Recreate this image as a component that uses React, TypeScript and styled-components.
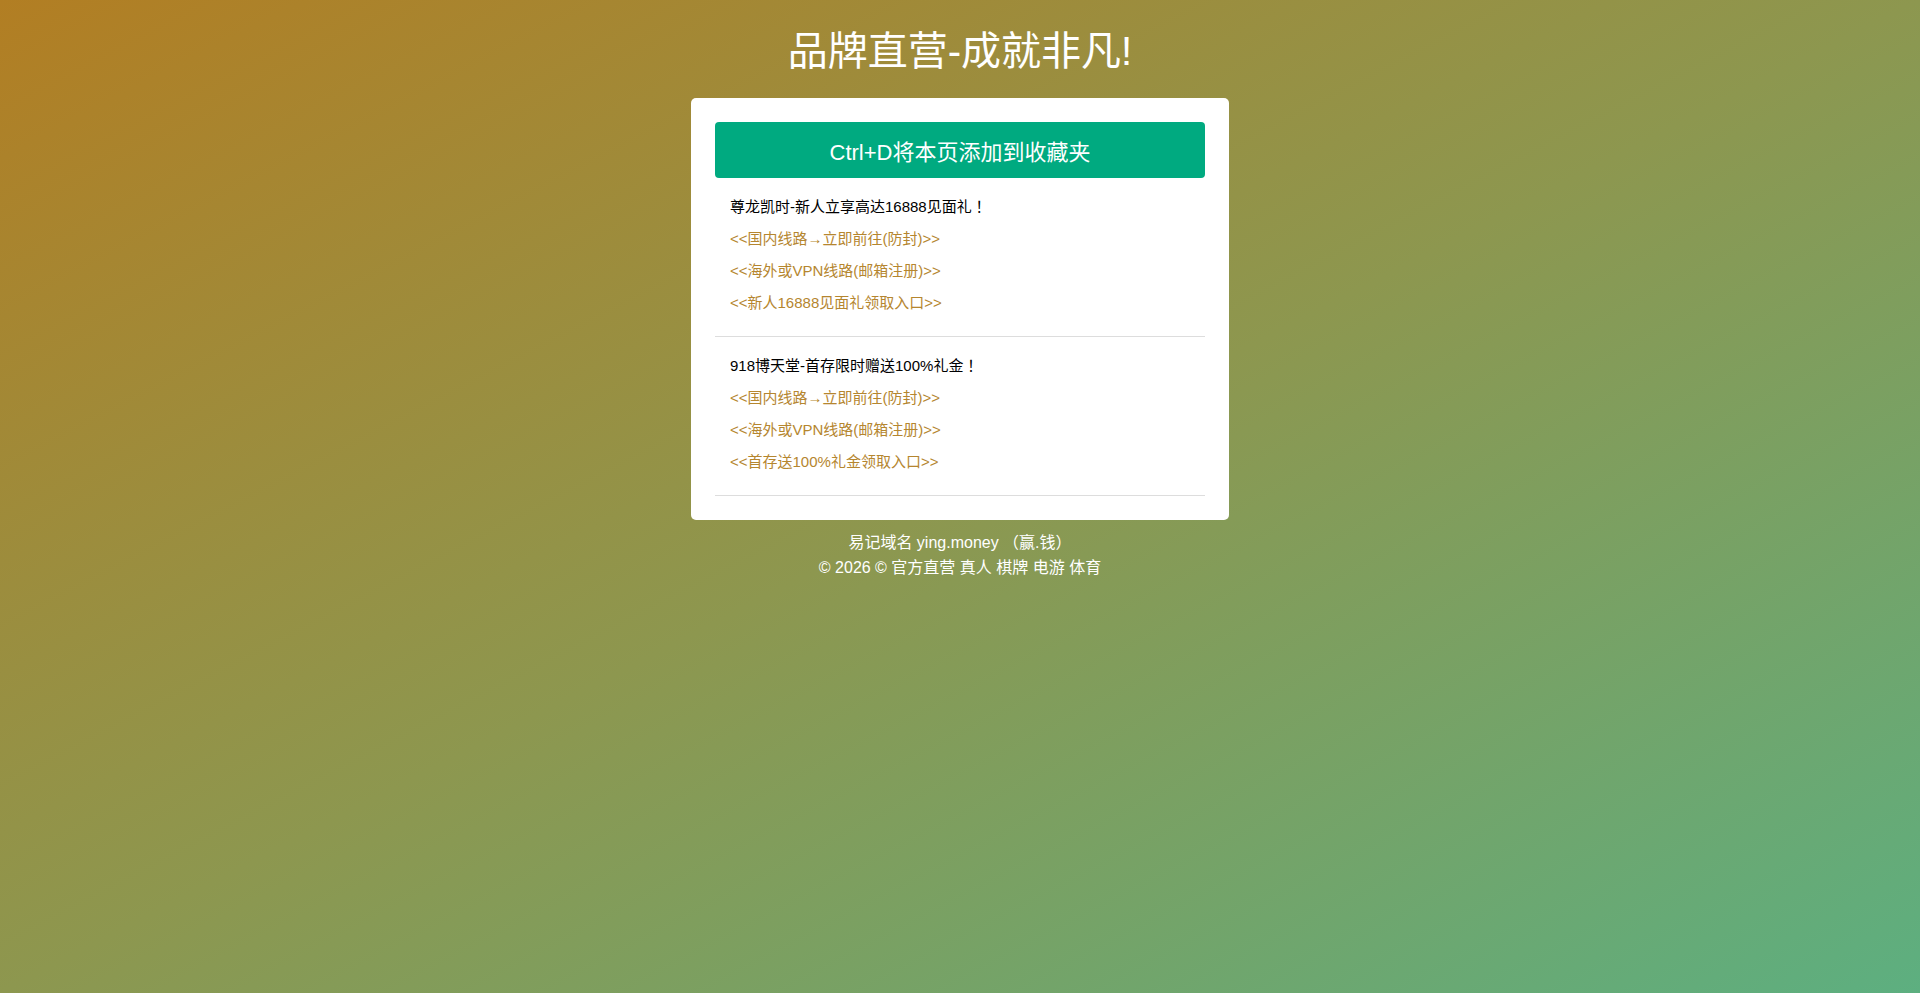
import React from 'react';
import styled, { createGlobalStyle } from 'styled-components';

const GlobalStyle = createGlobalStyle`
  html, body {
    margin: 0;
    padding: 0;
    min-height: 100%;
  }
  body {
    font-family: "Liberation Sans", Arial, "Noto Sans CJK SC", sans-serif;
    background: linear-gradient(to bottom right, #b27e23 0%, #8d974f 50%, #5daf80 100%);
    background-attachment: fixed;
    min-height: 993px;
  }
`;

const Page = styled.div`
  display: flex;
  flex-direction: column;
  align-items: center;
  padding-top: 27px;
  min-height: 993px;
  box-sizing: border-box;
`;

const Title = styled.h1`
  margin: 0 0 23px;
  font-size: 40px;
  line-height: 48px;
  font-weight: 400;
  color: #fff;
  text-align: center;
`;

const Card = styled.div`
  width: 538px;
  box-sizing: border-box;
  background: #fff;
  border-radius: 5px;
  padding: 24px;
`;

const FavButton = styled.div`
  height: 56px;
  display: flex;
  align-items: center;
  justify-content: center;
  background: #00aa80;
  border-radius: 4px;
  color: #fff;
  font-size: 22px;
`;

const Block = styled.ul`
  list-style: none;
  margin: 0;
  padding: 13px 15px 17px;
  border-bottom: 1px solid #dddddd;
`;

const Line = styled.li<{ $link?: boolean }>`
  font-size: 15px;
  line-height: 32px;
  color: ${({ $link }) => ($link ? '#b5862f' : '#000')};
  cursor: ${({ $link }) => ($link ? 'pointer' : 'default')};
`;

// full-width mark with the glyph centred in its em box
const Bang = styled.span`
  font-family: "Noto Sans CJK TC", "Noto Sans CJK SC", sans-serif;
  line-height: 0;
`;

const Footer = styled.div`
  margin-top: 11px;
  color: #fff;
  font-size: 16px;
  line-height: 24.5px;
  text-align: center;
`;

const sites = [
  {
    name: '尊龙凯时-新人立享高达16888见面礼',
    links: ['<<国内线路→立即前往(防封)>>', '<<海外或VPN线路(邮箱注册)>>', '<<新人16888见面礼领取入口>>'],
  },
  {
    name: '918博天堂-首存限时赠送100%礼金',
    links: ['<<国内线路→立即前往(防封)>>', '<<海外或VPN线路(邮箱注册)>>', '<<首存送100%礼金领取入口>>'],
  },
];

const App: React.FC = () => {
  return (
    <>
      <GlobalStyle />
      <Page>
        <Title>品牌直营-成就非凡!</Title>
        <Card>
          <FavButton>Ctrl+D将本页添加到收藏夹</FavButton>
          {sites.map((s) => (
            <Block key={s.name}>
              <Line>
                {s.name}
                <Bang>！</Bang>
              </Line>
              {s.links.map((l) => (
                <Line $link key={l}>{l}</Line>
              ))}
            </Block>
          ))}
        </Card>
        <Footer>
          <div>易记域名 ying.money （赢.钱）</div>
          <div>© 2026 © 官方直营 真人 棋牌 电游 体育</div>
        </Footer>
      </Page>
    </>
  );
};

export default App;
